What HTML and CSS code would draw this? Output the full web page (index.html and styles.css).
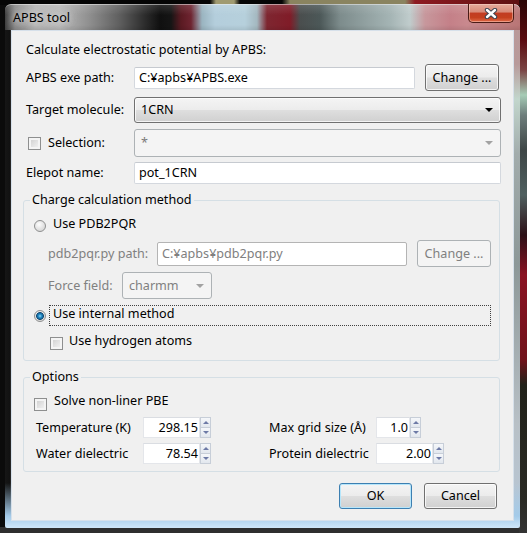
FILE: index.html
```html
<!DOCTYPE html>
<html>
<head>
<meta charset="utf-8">
<title>APBS tool</title>
<link rel="stylesheet" href="styles.css">
</head>
<body>
<div class="screen">
  <div class="window">
    <div class="titlebar">
      <span class="title">APBS tool</span>
      <div class="close">
        <svg width="14" height="11" viewBox="0 0 14 11">
          <path d="M3 2 L11 9 M11 2 L3 9" stroke="#3b4350" stroke-width="4.4" stroke-linecap="round"/>
          <path d="M3 2 L11 9 M11 2 L3 9" stroke="#ffffff" stroke-width="2.4" stroke-linecap="round"/>
        </svg>
      </div>
    </div>
    <div class="client">
      <div class="top">
        <div class="heading">Calculate electrostatic potential by APBS:</div>
        <div class="row r-exe">
          <span class="lbl">APBS exe path:</span>
          <div class="edit grow">C:¥apbs¥APBS.exe</div>
          <div class="btn btn-change">Change ...</div>
        </div>
        <div class="row r-target">
          <span class="lbl">Target molecule:</span>
          <div class="combo grow"><span>1CRN</span><span class="arrow"></span></div>
        </div>
        <div class="row r-sel">
          <span class="lbl lbl-check"><span class="check"></span><span>Selection:</span></span>
          <div class="combo combo-dis grow"><span class="star">*</span><span class="arrow arrow-dis"></span></div>
        </div>
        <div class="row r-elepot">
          <span class="lbl">Elepot name:</span>
          <div class="edit grow">pot_1CRN</div>
        </div>
      </div>

      <fieldset class="group g-charge">
        <legend>Charge calculation method</legend>
        <div class="opt r-pdb"><span class="radio"></span><span class="opt-text">Use PDB2PQR</span></div>
        <div class="sub r-path">
          <span class="sub-lbl dis-text">pdb2pqr.py path:</span>
          <div class="edit edit-dis grow">C:¥apbs¥pdb2pqr.py</div>
          <div class="btn btn-dis">Change ...</div>
        </div>
        <div class="sub r-ff">
          <span class="ff-lbl dis-text">Force field:</span>
          <div class="combo combo-dis ff-combo"><span class="dis-text">charmm</span><span class="arrow arrow-dis"></span></div>
        </div>
        <div class="opt r-int"><span class="radio radio-on"></span><span class="focus">Use internal method</span></div>
        <div class="opt r-hyd"><span class="check"></span><span class="hyd-text">Use hydrogen atoms</span></div>
      </fieldset>

      <fieldset class="group g-opt">
        <legend>Options</legend>
        <div class="opt r-solve"><span class="check"></span><span class="opt-text">Solve non-liner PBE</span></div>
        <div class="params">
          <span class="plbl">Temperature (K)</span>
          <div class="spin"><div class="spin-val w57">298.15</div><div class="spin-arr"><span class="up"></span><span class="dn"></span></div></div>
          <span class="plbl">Max grid size (Å)</span>
          <div class="spin"><div class="spin-val w34">1.0</div><div class="spin-arr"><span class="up"></span><span class="dn"></span></div></div>
          <span class="plbl">Water dielectric</span>
          <div class="spin"><div class="spin-val w57">78.54</div><div class="spin-arr"><span class="up"></span><span class="dn"></span></div></div>
          <span class="plbl">Protein dielectric</span>
          <div class="spin"><div class="spin-val w57">2.00</div><div class="spin-arr"><span class="up"></span><span class="dn"></span></div></div>
        </div>
      </fieldset>

      <div class="actions">
        <div class="btn btn-def">OK</div>
        <div class="btn btn-cancel">Cancel</div>
      </div>
    </div>
  </div>
</div>
</body>
</html>
```

FILE: styles.css
```css
* { box-sizing: border-box; }
html, body { margin: 0; padding: 0; }
body {
  width: 527px;
  height: 533px;
  overflow: hidden;
  font-family: "Noto Sans", "Liberation Sans", sans-serif;
  font-size: 12.6px;
  line-height: 16px;
  color: #000;
  background-color: #0b0b0b;
  background-image:
    linear-gradient(to bottom, #2a0606 0, #5a0c10 40px, #7a4444 70px, #a6ccb6 95px, #6e7e7c 115px, #3e4646 150px, #506060 195px, #2c1016 235px, #8a1222 275px, #70121a 360px, #22221a 385px, #2a2a24 500px, #343434 533px),
    linear-gradient(to right, #050505 0, #050505 210px, #a09a70 216px, #a09a70 234px, #050505 240px, #050505 282px, #8a8460 290px, #8a8460 405px, #8e1a22 415px, #5a1010 527px),
    linear-gradient(#2e2e2e, #2e2e2e);
  background-size: 8px 100%, 100% 5px, 100% 6px;
  background-position: right top, left top, left bottom;
  background-repeat: no-repeat;
}
.screen {
  height: 533px;
  padding: 4px 7px 5px 5px;
}
.window {
  height: 524px;
  display: flex;
  flex-direction: column;
  border-radius: 6px 6px 2px 2px;
  padding: 0 6px 7px 6px;
  background-image:
    linear-gradient(to bottom, rgba(166,205,234,0) 0, rgba(166,205,234,0) calc(100% - 45px), #a4cbe9 calc(100% - 12px), #cfe6f8 100%),
    linear-gradient(to bottom, #b99898 0, #b89a9a 60px, #c2d6cc 95px, #a2acac 150px, #8d9898 260px, #b8c0c6 420px, #b8c8d8 100%),
    linear-gradient(to right, #161616 0, #111 5px, #3a3a3a 6px, #3a3a3a 7px);
  background-size: 100% 100%, 6px 100%, 7px 100%;
  background-position: left top, right top, left top;
  background-repeat: no-repeat;
  background-color: #222;
}

/* title bar */
.titlebar {
  height: 28px;
  margin: 0 -6px;
  padding-left: 8px;
  display: flex;
  align-items: flex-start;
  justify-content: space-between;
  border-radius: 6px 6px 0 0;
  border-top: 1px solid rgba(255,255,255,0.55);
  background-image:
    linear-gradient(to bottom, rgba(255,255,255,0.12) 0, rgba(255,255,255,0) 10px, rgba(0,0,0,0) 20px, rgba(0,0,0,0.08) 100%),
    linear-gradient(to right, #3e3e3e 0, #8a8a8a 10px, #b4b4b4 30px, #b8b8b8 55px, #8e8e8e 85px, #5e5e5e 115px, #2c2c2c 140px, #101010 155px, #151515 166px, #5a1a22 176px, #6e2430 186px, #9ab4c0 197px, #b4cedc 210px, #b6d0dc 240px, #a4b8c0 252px, #7e2630 262px, #801c28 285px, #4a4e4e 295px, #4c5858 315px, #7d8c8c 335px, #a4b4b4 385px, #c0cccc 405px, #c7979c 420px, #c48088 445px, #c9898e 462px, #b97676 515px);
}
.title {
  margin-top: 5px;
  line-height: 16px;
  color: #000;
  text-shadow: 0 0 6px rgba(230,230,230,0.9), 0 0 10px rgba(230,230,230,0.7);
}
.close {
  width: 46px;
  height: 19px;
  margin-top: -1px;
  margin-right: 6px;
  display: flex;
  align-items: center;
  justify-content: center;
  border: 1px solid #4a1c16;
  border-top: 0;
  border-radius: 0 0 5px 5px;
  background: linear-gradient(to bottom, #e6ab9c 0, #d88a78 45%, #c23c22 50%, #c4401f 75%, #e06a48 100%);
  box-shadow: inset 0 0 0 1px rgba(255,220,210,0.45);
}
.close svg { display: block; }

/* client area */
.client {
  flex: 1;
  display: flex;
  flex-direction: column;
  background: #f0f0f0;
  border: 1px solid #d6e0ea;
  padding: 11px 13px 11px 11px;
}
.top {
  padding-left: 3px;
  margin-right: -1px;
}
.heading { height: 16px; }
.row {
  display: flex;
  align-items: center;
}
.r-exe { margin-top: 6px; height: 27px; }
.r-target { margin-top: 6px; height: 26px; }
.r-sel { margin-top: 6px; height: 28px; }
.r-elepot { margin-top: 5px; height: 22px; }
.lbl { width: 108px; flex: none; white-space: nowrap; }
.lbl-check { display: flex; align-items: center; }
.lbl-check .check { margin-left: 2px; margin-right: 7px; }
.grow { flex: 1; min-width: 0; }

.edit {
  height: 22px;
  background: #fff;
  border: 1px solid #d4d8de;
  border-top-color: #c6cad0;
  border-radius: 2px;
  padding: 0 4px;
  display: flex;
  align-items: center;
  white-space: nowrap;
}
.edit-dis {
  height: 24px;
  border-color: #b4b4b4;
  color: #808080;
}
.btn {
  height: 27px;
  border: 1px solid #707070;
  border-radius: 3px;
  display: flex;
  align-items: center;
  justify-content: center;
  background: linear-gradient(to bottom, #f4f4f4 0, #ececec 48%, #dedede 52%, #d0d0d0 100%);
  box-shadow: inset 0 0 0 1px rgba(255,255,255,0.75);
  color: #000;
  white-space: nowrap;
}
.btn-change { width: 74px; margin-left: 10px; margin-right: 2px; }
.btn-dis {
  width: 74px;
  margin-left: 10px;
  border-color: #adb2b5;
  background: #f4f4f4;
  box-shadow: none;
  color: #808080;
}
.combo {
  height: 26px;
  border: 1px solid #707070;
  border-radius: 3px;
  display: flex;
  align-items: center;
  padding-left: 6px;
  background: linear-gradient(to bottom, #f4f4f4 0, #ececec 48%, #dedede 52%, #d0d0d0 100%);
  box-shadow: inset 0 0 0 1px rgba(255,255,255,0.75);
}
.combo-dis {
  height: 28px;
  border-color: #adb2b5;
  background: #f4f4f4;
  box-shadow: none;
}
.star { color: #7a7a7a; }
.arrow {
  margin-left: auto;
  margin-right: 7px;
  width: 0;
  height: 0;
  border-left: 4px solid transparent;
  border-right: 4px solid transparent;
  border-top: 4px solid #000;
}
.arrow-dis { border-top-color: #a2a2a2; }

.check {
  flex: none;
  width: 13px;
  height: 13px;
  border: 1px solid #8e8f8f;
  background: linear-gradient(135deg, #cbcbcb 0, #e6e6e6 60%, #f6f6f6 100%);
  box-shadow: inset 0 0 0 2px #f4f4f4;
}
.radio {
  flex: none;
  width: 12px;
  height: 12px;
  border-radius: 50%;
  border: 1px solid #8e8f8f;
  background: radial-gradient(circle at 40% 35%, #fdfdfd 0, #e4e4e4 50%, #cfcfcf 100%);
}
.radio-on {
  background:
    radial-gradient(circle at 50% 50%, #9adcf8 0, #2e93cc 1.5px, #116397 3px, #1a4a70 3.6px, rgba(0,0,0,0) 4.2px),
    radial-gradient(circle at 40% 35%, #fdfdfd 0, #e4e4e4 50%, #cfcfcf 100%);
}
.dis-text { color: #808080; }

/* group boxes */
.group {
  margin: 8px 0 0 0;
  padding: 0 8px 10px 10px;
  border: 1px solid #d5dfe5;
  border-radius: 3px;
  min-width: 0;
}
.group legend {
  margin-left: -4px;
  padding: 0 2px;
  line-height: 16px;
}
.opt { display: flex; align-items: flex-start; }
.r-pdb { margin-top: 8px; }
.r-pdb .radio { margin-top: 4px; }
.opt-text { margin-left: 7px; }
.sub {
  display: flex;
  align-items: center;
  margin-left: 14px;
}
.r-path { margin-top: 8px; height: 27px; }
.sub-lbl { width: 109px; flex: none; white-space: nowrap; }
.r-ff { margin-top: 5px; height: 27px; }
.ff-lbl { width: 74px; flex: none; white-space: nowrap; }
.ff-combo { width: 90px; height: 27px; }
.r-int { margin-top: 6px; }
.r-int .radio { margin-top: 5px; }
.focus {
  flex: 1;
  margin-left: 3px;
  border: 1px dotted #404040;
  padding: 0 3px 3px 3px;
}
.r-hyd { margin-top: 7px; margin-left: 16px; }
.r-hyd .check { margin-top: 4px; }
.hyd-text { margin-left: 6px; }

.g-opt { padding-bottom: 7px; }
.r-solve { margin-top: 8px; }
.r-solve .check { margin-top: 5px; }
.params {
  margin-top: 6px;
  margin-left: 2px;
  display: grid;
  grid-template-columns: 107px 126px 107px auto;
  grid-auto-rows: 21px;
  row-gap: 5px;
  align-items: center;
  white-space: nowrap;
}
.spin { display: flex; height: 21px; }
.spin-val {
  height: 21px;
  background: #fff;
  border: 1px solid #e4e6ea;
  border-top-color: #dadde2;
  text-align: right;
  padding-right: 1px;
  line-height: 19px;
}
.w57 { width: 57px; }
.w34 { width: 34px; }
.spin-arr {
  width: 11px;
  display: flex;
  flex-direction: column;
}
.up, .dn {
  flex: 1;
  display: flex;
  align-items: center;
  justify-content: center;
  border: 1px solid #c7ced8;
  background: linear-gradient(to bottom, #f5f7fa, #e2e7ee);
}
.dn { border-top: 0; }
.up::after, .dn::after {
  content: "";
  width: 0;
  height: 0;
  border-left: 3px solid transparent;
  border-right: 3px solid transparent;
}
.up::after { border-bottom: 3px solid #6d7aa6; }
.dn::after { border-top: 3px solid #6d7aa6; }

.actions {
  margin-top: 11px;
  margin-right: 3px;
  display: flex;
  justify-content: flex-end;
  gap: 12px;
}
.actions .btn { width: 73px; height: 26px; }
.btn-def {
  border-color: #3c7fb1;
  box-shadow: inset 0 0 0 1px #b6e6fb;
}
```
